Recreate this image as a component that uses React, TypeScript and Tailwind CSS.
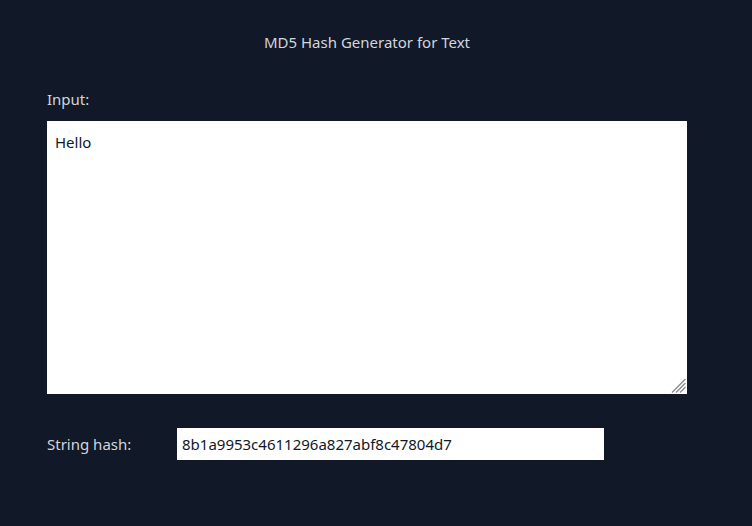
import React from "react";

export default function App() {
  return (
    <div
      className="min-h-[526px] w-full bg-[#111827] text-[#d1d5db]"
      style={{ fontFamily: '"Noto Sans", "Open Sans", sans-serif' }}
    >
      <div className="ml-[47px] w-[640px] pt-[31px]">
        <h1 className="text-center text-[15px] leading-[22px] font-normal">MD5 Hash Generator for Text</h1>
        <label className="mt-[35px] block text-[15px] leading-[22px]">Input:</label>
        <div className="relative mt-[11px] h-[273px] w-[640px]">
          <textarea
            className="block h-[273px] w-[640px] resize-none bg-white px-[8px] py-[10px] text-[15px] leading-[22px] text-[#111827] outline-none"
            defaultValue="Hello"
          />
          <svg
            className="pointer-events-none absolute right-[1px] bottom-[1px]"
            width="15"
            height="15"
            viewBox="0 0 15 15"
          >
            <g stroke="#8a8a8a" strokeWidth="1.3" strokeLinecap="square">
              <line x1="14" y1="1.5" x2="1.5" y2="14" />
              <line x1="14" y1="5.5" x2="5.5" y2="14" />
              <line x1="14" y1="9.5" x2="9.5" y2="14" />
            </g>
          </svg>
        </div>
        <div className="mt-[34px] flex items-center">
          <span className="w-[130px] text-[15px] leading-[22px]">String hash:</span>
          <input
            className="h-[32px] w-[427px] bg-white px-[5px] text-[15px] text-[#111827] outline-none"
            readOnly
            value="8b1a9953c4611296a827abf8c47804d7"
          />
        </div>
      </div>
    </div>
  );
}
